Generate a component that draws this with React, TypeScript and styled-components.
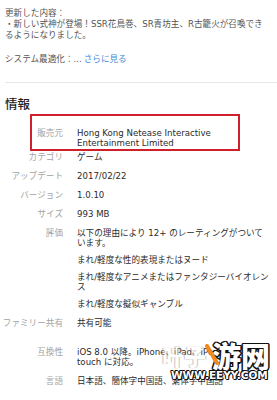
import React from 'react'
import styled, { createGlobalStyle } from 'styled-components'

const GlobalStyle = createGlobalStyle`
  html, body {
    margin: 0;
    padding: 0;
    background: #fff;
  }
  body {
    font-family: "DejaVu Sans", "Noto Sans CJK JP", sans-serif;
    -webkit-font-smoothing: antialiased;
  }
`

const Page = styled.div`
  position: relative;
  width: 277px;
  height: 400px;
  overflow: hidden;
  background: #fff;
`

const WhatsNew = styled.div`
  padding: 8px 5px 0 5px;
  color: #555;
  font-size: 8.6px;
  line-height: 11px;
`

const Line = styled.div`
  white-space: nowrap;
`

const Summary = styled.div`
  margin-top: 13px;
  white-space: nowrap;
`

const More = styled.span`
  color: #3d8ee0;
  margin-left: 2px;
`

const Divider = styled.div`
  margin: 17px 0 0 5px;
  height: 1px;
  background: #e6e6e6;
`

const Heading = styled.div`
  margin: 13px 0 0 5px;
  font-family: "Noto Sans CJK JP", sans-serif;
  font-size: 12.5px;
  line-height: 16px;
  color: #222;
  font-weight: 500;
`

const InfoList = styled.div`
  display: flex;
  flex-direction: column;
  gap: 9px;
  margin-top: 16px;
  font-size: 8.6px;
  line-height: 10px;
`

const Row = styled.div<{ $highlight?: boolean; $spaced?: boolean }>`
  position: relative;
  display: grid;
  grid-template-columns: 63px 1fr;
  column-gap: 14px;
  margin-bottom: ${(p) => (p.$highlight ? '-5px' : '0')};
  margin-top: ${(p) => (p.$spaced ? '10px' : '0')};

  &::before {
    content: '';
    display: ${(p) => (p.$highlight ? 'block' : 'none')};
    position: absolute;
    left: 30px;
    right: 37px;
    top: -14px;
    bottom: -3px;
    border: 2px solid #cf1f2b;
  }
`

const Label = styled.div`
  text-align: right;
  color: #a3a3a3;
  white-space: nowrap;
`

const Value = styled.div`
  display: flex;
  flex-direction: column;
  gap: 7px;
  color: #2b2b2b;
  white-space: nowrap;
`

const Watermark = styled.div`
  position: absolute;
  left: 162px;
  top: 337px;
  width: 113px;
  pointer-events: none;
  font-family: "Noto Sans CJK SC", sans-serif;
`

const Glyphs = styled.div`
  display: flex;
  align-items: flex-end;
  line-height: 36px;
  font-weight: 900;
  color: #fff;
`

const Glyph = styled.span<{ $faded?: boolean }>`
  font-size: ${(p) => (p.$faded ? '22px' : '29px')};
  opacity: ${(p) => (p.$faded ? 0.5 : 1)};
  margin-left: ${(p) => (p.$faded ? '0' : '6px')};
  text-shadow: ${(p) =>
    p.$faded
      ? '0 0 1px #777, 1px 0 0 #999, -1px 0 0 #999'
      : '1.5px 0 0 #111, -1.5px 0 0 #111, 0 1.5px 0 #111, 0 -1.5px 0 #111, 1px 1px 0 #111, -1px -1px 0 #111, 1px -1px 0 #111, -1px 1px 0 #111'};
`

const Slash = styled.svg`
  position: absolute;
  left: 42px;
  top: 7px;
`

const Site = styled.div`
  margin: -3px 0 0 9px;
  font-family: "DejaVu Sans", sans-serif;
  font-size: 10.5px;
  line-height: 11px;
  font-weight: 700;
  color: #fff;
  text-shadow: 1px 0 0 #111, -1px 0 0 #111, 0 1px 0 #111, 0 -1px 0 #111, 1px 1px 0 #111, -1px -1px 0 #111;
`

const App = () => {
  return (
    <Page>
      <GlobalStyle />
      <WhatsNew>
        <Line>更新した内容：</Line>
        <Line>・新しい式神が登場！SSR花鳥巻、SR青坊主、R古籠火が召喚でき</Line>
        <Line>るようになりました。</Line>
        <Summary>
          システム最適化：...<More>さらに見る</More>
        </Summary>
      </WhatsNew>
      <Divider />
      <Heading>情報</Heading>
      <InfoList>
        <Row $highlight>
          <Label>販売元</Label>
          <Value>
            <div>
              Hong Kong Netease Interactive
              <br />
              Entertainment Limited
            </div>
          </Value>
        </Row>
        <Row>
          <Label>カテゴリ</Label>
          <Value>ゲーム</Value>
        </Row>
        <Row>
          <Label>アップデート</Label>
          <Value>2017/02/22</Value>
        </Row>
        <Row>
          <Label>バージョン</Label>
          <Value>1.0.10</Value>
        </Row>
        <Row>
          <Label>サイズ</Label>
          <Value>993 MB</Value>
        </Row>
        <Row>
          <Label>評価</Label>
          <Value>
            <div>
              以下の理由により 12+ のレーティングがついて
              <br />
              います。
            </div>
            <div>まれ/軽度な性的表現またはヌード</div>
            <div>
              まれ/軽度なアニメまたはファンタジーバイオレン
              <br />
              ス
            </div>
            <div>まれ/軽度な擬似ギャンブル</div>
          </Value>
        </Row>
        <Row>
          <Label>ファミリー共有</Label>
          <Value>共有可能</Value>
        </Row>
        <Row $spaced>
          <Label>互換性</Label>
          <Value>
            <div>
              iOS 8.0 以降。iPhone、iPad、iPod
              <br />
              touch に対応。
            </div>
          </Value>
        </Row>
        <Row>
          <Label>言語</Label>
          <Value>日本語、簡体字中国語、繁体字中国語</Value>
        </Row>
      </InfoList>
      <Watermark>
        <Slash width="16" height="22" viewBox="0 0 16 22">
          <path d="M3 2 L13 19" stroke="#f08a1c" strokeWidth="4" strokeLinecap="round" />
        </Slash>
        <Glyphs>
          <Glyph $faded>叶子</Glyph>
          <Glyph>游网</Glyph>
        </Glyphs>
        <Site>WWW.EEYY.COM</Site>
      </Watermark>
    </Page>
  )
}

export default App
